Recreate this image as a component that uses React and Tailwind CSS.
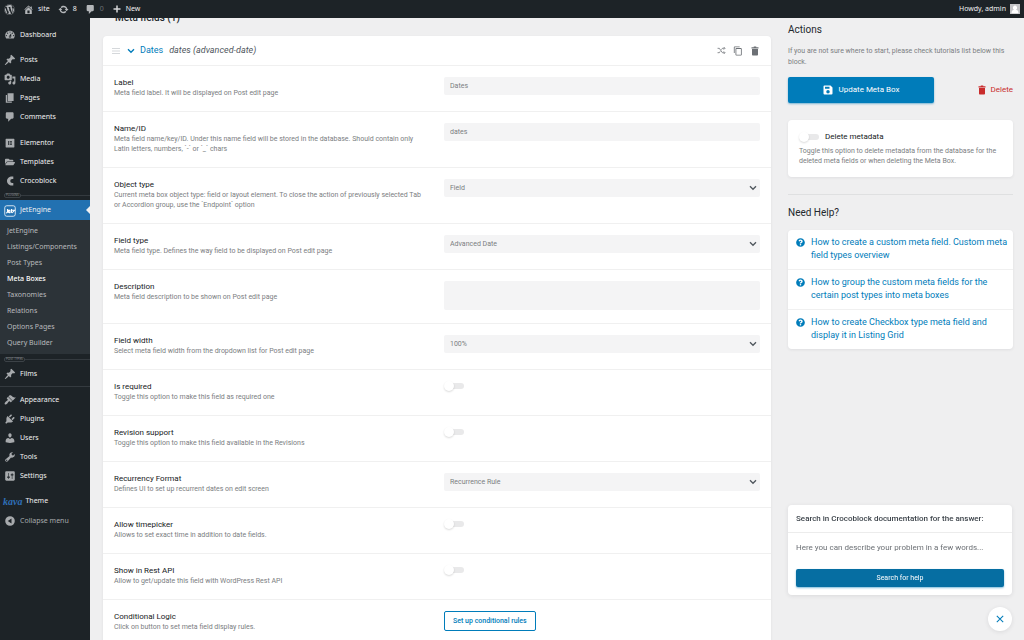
import React, { useState } from 'react';
import clsx from 'clsx';
import { FaWordpress, FaElementor, FaFolderOpen, FaQuestionCircle } from 'react-icons/fa';
import { MdContentCopy } from 'react-icons/md';

const ICONS = {
    home: 'M16 8.5l1.53 1.53-1.06 1.06L10 4.6l-6.47 6.49-1.06-1.06L10 2.5l4 4v-2h2v4zm-6-2.46l6 5.99V18H4v-5.97zM12 17v-5H8v5h4z',
    update: 'M10.2 3.28c3.53 0 6.43 2.61 6.92 6h2.08l-3.5 4-3.5-4h2.32c-.45-1.97-2.21-3.45-4.32-3.45-1.45 0-2.73.71-3.54 1.78L4.95 5.66C6.23 4.2 8.11 3.28 10.2 3.28zm-.4 13.44c-3.52 0-6.43-2.61-6.92-6H.8l3.5-4c1.17 1.33 2.33 2.67 3.5 4H5.48c.45 1.97 2.21 3.45 4.32 3.45 1.45 0 2.73-.71 3.54-1.78l1.71 1.95c-1.28 1.46-3.15 2.38-5.25 2.38z',
    plus: 'M17 8.5v3h-5.5V17h-3v-5.5H3v-3h5.5V3h3v5.5z',
    dashboard: 'M3.76 16h12.48c1.1-1.37 1.76-3.11 1.76-5 0-4.42-3.58-8-8-8s-8 3.58-8 8c0 1.89.66 3.63 1.76 5zM10 4c.55 0 1 .45 1 1s-.45 1-1 1-1-.45-1-1 .45-1 1-1zM6 6c.55 0 1 .45 1 1s-.45 1-1 1-1-.45-1-1 .45-1 1-1zm8 0c.55 0 1 .45 1 1s-.45 1-1 1-1-.45-1-1 .45-1 1-1zm-5.37 5.55L12 7v6c0 1.1-.9 2-2 2s-2-.9-2-2c0-.57.24-1.08.63-1.45zM4 10c.55 0 1 .45 1 1s-.45 1-1 1-1-.45-1-1 .45-1 1-1zm12 0c.55 0 1 .45 1 1s-.45 1-1 1-1-.45-1-1 .45-1 1-1zm-5 3c0-.55-.45-1-1-1s-1 .45-1 1 .45 1 1 1 1-.45 1-1z',
    post: 'M10.44 3.02l1.82-1.82 6.36 6.35-1.83 1.82c-1.05-.68-2.48-.57-3.41.36l-.75.75c-.92.93-1.04 2.35-.35 3.41l-1.83 1.82-2.41-2.41-2.8 2.79c-.42.42-3.38 2.71-3.8 2.29s1.86-3.39 2.28-3.81l2.79-2.79L4.1 9.36l1.83-1.82c1.05.69 2.48.57 3.4-.36l.75-.75c.93-.92 1.05-2.35.36-3.41z',
    media: 'M13 11V4c0-.55-.45-1-1-1h-1.67L9 1H5L3.67 3H2c-.55 0-1 .45-1 1v7c0 .55.45 1 1 1h10c.55 0 1-.45 1-1zM7 4.5c1.38 0 2.5 1.12 2.5 2.5S8.38 9.5 7 9.5 4.5 8.38 4.5 7 5.62 4.5 7 4.5zM14 6h5v10.5c0 1.38-1.12 2.5-2.5 2.5S14 17.88 14 16.5s1.12-2.5 2.5-2.5c.17 0 .34.02.5.05V9h-3V6zm-4 8.05V13h2v3.5c0 1.38-1.12 2.5-2.5 2.5S7 17.88 7 16.5 8.12 14 9.5 14c.17 0 .34.02.5.05z',
    page: 'M6 15V2h10v13H6zm-1 1h8v2H3V5h2v11z',
    comment: 'M5 2h9c1.1 0 2 .9 2 2v7c0 1.1-.9 2-2 2h-2l-5 5v-5H5c-1.1 0-2-.9-2-2V4c0-1.1.9-2 2-2z',
    crocoblock: 'M15.5 2.5v4.2h-1.8a3.3 3.3 0 0 0 0 6.6h1.8v4.2h-2.2C8.700 17.500 5 14.200 5 10s3.700-7.500 8.300-7.500z',
    appearance: 'M14.48 11.06L7.41 3.99l1.5-1.5c.5-.56 2.3-.47 3.51.32 1.21.8 1.43 1.28 2.91 2.1 1.18.64 2.45 1.26 4.45.85zm-.71.71L6.7 4.7 4.93 6.47c-.39.39-.39 1.02 0 1.41l1.06 1.06c.39.39.39 1.03 0 1.42-.6.6-1.43 1.11-2.21 1.69-.35.26-.7.53-1.01.84C1.43 14.23.4 16.08 1.4 17.07c.99 1 2.84-.03 4.18-1.36.31-.31.58-.66.85-1.02.57-.78 1.08-1.61 1.69-2.21.39-.39 1.02-.39 1.41 0l1.06 1.06c.39.39 1.02.39 1.41 0z',
    plugins: 'M13.11 4.36L9.87 7.6 8 5.73l3.24-3.24c.35-.34 1.05-.2 1.56.32.52.51.66 1.21.31 1.55zm-8 1.77l.91-1.12 9.01 9.01-1.19.84c-.71.71-2.63 1.16-3.82 1.16H6.14L4.9 17.26c-.59.59-1.54.59-2.12 0-.59-.58-.59-1.53 0-2.12l1.24-1.24v-3.88c0-1.13.4-3.19 1.09-3.89zm7.26 3.97l3.24-3.24c.34-.35 1.04-.21 1.55.31.52.51.66 1.21.31 1.55l-3.24 3.25z',
    users: 'M10 9.25c-2.27 0-2.73-3.44-2.73-3.44C7 4.02 7.82 2 9.97 2c2.16 0 2.98 2.02 2.71 3.81 0 0-.41 3.44-2.68 3.44zm0 2.57L12.72 10c2.39 0 4.52 2.33 4.52 4.53v2.49s-3.65 1.13-7.24 1.13c-3.65 0-7.24-1.13-7.24-1.13v-2.49c0-2.25 1.94-4.48 4.47-4.48z',
    tools: 'M16.68 9.77c-1.34 1.34-3.3 1.67-4.95.99l-5.41 6.52c-.99.99-2.59.99-3.58 0s-.99-2.59 0-3.57l6.52-5.42c-.68-1.65-.35-3.61.99-4.95 1.28-1.28 3.12-1.62 4.72-1.06l-2.89 2.89 2.82 2.82 2.86-2.87c.53 1.58.18 3.39-1.08 4.65zM3.81 16.21c.4.39 1.04.39 1.43 0 .4-.4.4-1.04 0-1.43-.39-.4-1.03-.4-1.43 0-.39.39-.39 1.03 0 1.43z',
    settings: 'M18 16V4c0-1.1-.9-2-2-2H4c-1.1 0-2 .9-2 2v12c0 1.1.9 2 2 2h12c1.1 0 2-.9 2-2zM8 11h1c.55 0 1 .45 1 1s-.45 1-1 1H8v1.5c0 .28-.22.5-.5.5s-.5-.22-.5-.5V13H6c-.55 0-1-.45-1-1s.45-1 1-1h1V5.5c0-.28.22-.5.5-.5s.5.22.5.5V11zm5-2h-1c-.55 0-1-.45-1-1s.45-1 1-1h1V5.5c0-.28.22-.5.5-.5s.5.22.5.5V7h1c.55 0 1 .45 1 1s-.45 1-1 1h-1v5.5c0 .28-.22.5-.5.5s-.5-.22-.5-.5V9z',
    collapse: 'M10 2a8 8 0 1 0 0 16 8 8 0 0 0 0-16zm2.500 12.200L6.300 10l6.200-4.200z',
    trash: 'M7.500 1h5v1.500H17v2.300H3V2.500h4.500zM4 6h12v11c0 1.100-.9 2-2 2H6c-1.100 0-2-.9-2-2z',
    save: 'M3 1h12l4 4v12a2 2 0 0 1-2 2H3a2 2 0 0 1-2-2V3a2 2 0 0 1 2-2zm1 2.500v4h9v-4zm6 6.500a3.500 3.500 0 1 0 0 7 3.500 3.500 0 0 0 0-7z',
};

const Icon = ({ name, className = 'size-3' }) => (
    <svg viewBox="0 0 20 20" className={clsx('shrink-0 fill-current', className)} fillRule="evenodd" aria-hidden="true">
        <path d={ICONS[name]} />
    </svg>
);

const JetIcon = () => (
    <svg viewBox="0 0 24 24" className="size-3 shrink-0" fill="none" stroke="currentColor" aria-hidden="true">
        <rect x="1.500" y="1.500" width="21" height="21" rx="4" strokeWidth="1.600" />
        <path d="M7 8v5c0 2-1 3-3 3M8 12.500h4c0-3-4-3-4 0s3 3.500 5 2M15 8v6c0 1 .6 1.500 2 1.500M13.500 10.500H21L17 15" strokeWidth="2.200" />
    </svg>
);

const Chevron = ({ className }) => (
    <svg viewBox="0 0 12 8" className={className} fill="none" stroke="currentColor" strokeWidth="2" aria-hidden="true">
        <path d="M1.500 1.500L6 6l4.500-4.500" />
    </svg>
);

const AdminBar = () => (
    <header className="relative z-10 flex h-[18px] shrink-0 items-center justify-between bg-[#1d2327] px-1 font-['Noto_Sans',sans-serif] text-[7px] text-[#f0f0f1]">
        <div className="flex items-center gap-2">
            <a href="#wp" aria-label="About WordPress" className="text-[#b4b7ba]"><FaWordpress className="size-[11px]" /></a>
            <a href="#site" className="flex items-center gap-1"><Icon name="home" className="size-[11px] text-[#b4b7ba]" />site</a>
            <a href="#updates" className="flex items-center gap-1"><Icon name="update" className="size-[11px] text-[#b4b7ba]" />8</a>
            <a href="#comments" className="flex items-center gap-1 text-[#6d7175]"><Icon name="comment" className="size-[11px] text-[#b4b7ba]" />0</a>
            <a href="#new" className="flex items-center gap-1"><Icon name="plus" className="size-2.5 text-[#d5d6d8]" />New</a>
        </div>
        <a href="#profile" className="flex items-center gap-1">
            Howdy, admin
            <svg viewBox="0 0 20 20" className="size-2.5 bg-[#c3c4c7]" aria-hidden="true">
                <path d="M10 3a4 4.500 0 0 1 2 8.500c3 .5 5 2.500 5 7H3c0-4.500 2-6.500 5-7A4 4.500 0 0 1 10 3z" fill="#fff" />
            </svg>
        </a>
    </header>
);

const NavItem = ({ icon, active, muted, children }) => (
    <a
        href="#menu"
        aria-current={active ? 'page' : undefined}
        className={clsx(
            'relative flex items-center gap-1 pt-px pl-1 text-[7px]',
            active ? 'h-5 bg-[#2271b1]' : 'h-[19px]',
            muted ? 'text-[#a7aaad]' : 'text-[#f0f0f1]'
        )}
    >
        <span className={clsx('flex size-3 items-center justify-center', active ? 'text-white' : 'text-[#a7aaad]')}>{icon}</span>
        {children}
        {active && <span className="absolute top-1.5 right-0 border-y-4 border-r-4 border-y-transparent border-r-[#f0f0f1]" />}
    </a>
);

const NavDivider = ({ label }) => (
    <div className="flex h-2.5 items-center pl-1">
        <span className="rounded-xs border border-[#3c4247] px-px text-[3px] leading-[3px] text-[#8c8f94] uppercase">{label}</span>
        <span className="h-px flex-1 bg-[#343a3f]" />
    </div>
);

const SUBMENU = ['JetEngine', 'Listings/Components', 'Post Types', 'Meta Boxes', 'Taxonomies', 'Relations', 'Options Pages', 'Query Builder'];

const Sidebar = () => (
    <nav className="w-[90px] shrink-0 bg-[#1d2327] pt-[7px] font-['Noto_Sans',sans-serif]">
        <NavItem icon={<Icon name="dashboard" />}>Dashboard</NavItem>
        <div className="h-1.5" />
        <NavItem icon={<Icon name="post" />}>Posts</NavItem>
        <NavItem icon={<Icon name="media" />}>Media</NavItem>
        <NavItem icon={<Icon name="page" />}>Pages</NavItem>
        <NavItem icon={<Icon name="comment" />}>Comments</NavItem>
        <div className="h-[7px]" />
        <NavItem icon={<FaElementor className="size-2.5" />}>Elementor</NavItem>
        <NavItem icon={<FaFolderOpen className="size-2.5" />}>Templates</NavItem>
        <NavItem icon={<Icon name="crocoblock" />}>Crocoblock</NavItem>
        <NavDivider label="Plugins" />
        <NavItem active icon={<JetIcon />}>JetEngine</NavItem>
        <ul className="bg-[#2c3338] py-[3px]">
            {SUBMENU.map((item) => (
                <li key={item}>
                    <a
                        href="#submenu"
                        className={clsx(
                            'flex h-4 items-center pl-[7px] text-[7px]',
                            item === 'Meta Boxes' ? 'font-medium text-white' : 'text-[#b8babd]'
                        )}
                    >
                        {item}
                    </a>
                </li>
            ))}
        </ul>
        <NavDivider label="Post types" />
        <NavItem icon={<Icon name="post" />}>Films</NavItem>
        <div className="flex h-[7px] items-center"><span className="h-px flex-1 bg-[#343a3f]" /></div>
        <NavItem icon={<Icon name="appearance" />}>Appearance</NavItem>
        <NavItem icon={<Icon name="plugins" />}>Plugins</NavItem>
        <NavItem icon={<Icon name="users" />}>Users</NavItem>
        <NavItem icon={<Icon name="tools" />}>Tools</NavItem>
        <NavItem icon={<Icon name="settings" />}>Settings</NavItem>
        <div className="h-1.5" />
        <a href="#theme" className="flex h-5 items-center gap-[3px] pl-[3px] text-[7px] text-[#f0f0f1]">
            <span className="font-['Liberation_Serif',serif] text-[10px] font-bold text-[#2f6fb7] italic">kava</span>
            Theme
        </a>
        <NavItem muted icon={<Icon name="collapse" />}>Collapse menu</NavItem>
    </nav>
);

const Toggle = ({ id }) => (
    <input
        id={id}
        type="checkbox"
        className="relative block h-2.5 w-5 shrink-0 cursor-pointer appearance-none before:absolute before:inset-y-0.5 before:right-0 before:left-1 before:rounded-full before:bg-[#e9e9ea] after:absolute after:top-0 after:left-0 after:size-2.5 after:rounded-full after:bg-white after:shadow-[0_1px_2px_rgba(0,0,0,0.15)] checked:before:bg-[#7fbddb] checked:after:left-2.5"
    />
);

const inputClass = 'block w-full rounded-xs bg-[#f4f4f5] px-1.5 text-[7px] text-[#7b7e81] outline-none';

const Field = ({ field }) => {
    const { id, type, value } = field;

    if (type === 'text') return <input id={id} type="text" defaultValue={value} className={clsx(inputClass, 'h-[18px]')} />;
    if (type === 'textarea') return <textarea id={id} className={clsx(inputClass, 'h-[29px] resize-none')} />;
    if (type === 'toggle') return <Toggle id={id} />;
    if (type === 'button') {
        return (
            <button id={id} type="button" className="block h-5 rounded-xs border border-[#007cba] px-2 text-[7px] font-medium text-[#007cba]">
                {value}
            </button>
        );
    }
    return (
        <div className="relative">
            <select id={id} className={clsx(inputClass, 'h-[18px] appearance-none')}>
                <option>{value}</option>
            </select>
            <Chevron className="pointer-events-none absolute top-1.5 right-[3px] h-1.5 w-2 text-[#50575e]" />
        </div>
    );
};

const FIELDS = [
    { id: 'label', type: 'text', label: 'Label', desc: 'Meta field label. It will be displayed on Post edit page', value: 'Dates' },
    { id: 'name', type: 'text', label: 'Name/ID', desc: 'Meta field name/key/ID. Under this name field will be stored in the database. Should contain only Latin letters, numbers, `-` or `_` chars', value: 'dates' },
    { id: 'object-type', type: 'select', label: 'Object type', desc: 'Current meta box object type: field or layout element. To close the action of previously selected Tab or Accordion group, use the `Endpoint` option', value: 'Field' },
    { id: 'field-type', type: 'select', label: 'Field type', desc: 'Meta field type. Defines the way field to be displayed on Post edit page', value: 'Advanced Date' },
    { id: 'description', type: 'textarea', label: 'Description', desc: 'Meta field description to be shown on Post edit page' },
    { id: 'width', type: 'select', label: 'Field width', desc: 'Select meta field width from the dropdown list for Post edit page', value: '100%' },
    { id: 'required', type: 'toggle', label: 'Is required', desc: 'Toggle this option to make this field as required one' },
    { id: 'revisions', type: 'toggle', label: 'Revision support', desc: 'Toggle this option to make this field available in the Revisions' },
    { id: 'recurrency', type: 'select', label: 'Recurrency Format', desc: 'Defines UI to set up recurrent dates on edit screen', value: 'Recurrence Rule' },
    { id: 'timepicker', type: 'toggle', label: 'Allow timepicker', desc: 'Allows to set exact time in addition to date fields.' },
    { id: 'rest-api', type: 'toggle', label: 'Show in Rest API', desc: 'Allow to get/update this field with WordPress Rest API' },
    { id: 'conditional', type: 'button', label: 'Conditional Logic', desc: 'Click on button to set meta field display rules.', value: 'Set up conditional rules' },
];

const MetaFields = () => (
    <main className="min-w-0 flex-1">
        <h2 className="-mt-[7px] mb-[11px] pl-3 text-[10px] leading-[14px] font-medium text-[#23282d]">Meta fields (1)</h2>
        <section className="rounded-sm bg-white shadow-[0_1px_3px_rgba(35,40,45,0.08)]">
            <div className="flex h-[30px] items-center justify-between border-b border-[#f0f0f0] pr-[11px] pl-[9px]">
                <div className="flex items-center">
                    <svg viewBox="0 0 8 8" className="mr-[7px] size-2 stroke-[#d5d8db]" aria-hidden="true">
                        <path d="M0 1.500h8M0 4h8M0 6.500h8" />
                    </svg>
                    <button type="button" className="flex items-center gap-[5px] text-[9px] text-[#007cba]">
                        <Chevron className="h-1.5 w-2" />
                        Dates
                    </button>
                    <span className="ml-1.5 text-[9px] text-[#50575e] italic">dates (advanced-date)</span>
                </div>
                <div className="flex items-center gap-[7px] text-[#6c7075]">
                    <button type="button" aria-label="Shuffle">
                        <svg viewBox="0 0 20 16" className="h-[7px] w-[9px]" fill="none" stroke="currentColor" strokeWidth="1.800" aria-hidden="true">
                            <path d="M1 3h4l7 10h5M1 13h4l2-3M10 6l2-3h5M15 0l3 3-3 3M15 10l3 3-3 3" />
                        </svg>
                    </button>
                    <button type="button" aria-label="Duplicate"><MdContentCopy className="size-2.5" /></button>
                    <button type="button" aria-label="Remove"><Icon name="trash" className="size-2.5" /></button>
                </div>
            </div>
            {FIELDS.map((field) => (
                <div key={field.id} className="grid grid-cols-2 gap-x-3.5 border-b border-[#f0f0f0] px-[11px] pt-[11px] pb-[13px]">
                    <div className="pr-2">
                        <label htmlFor={field.id} className="block text-[8px] leading-[11px] text-[#16191c]">{field.label}</label>
                        <p className="text-[7px] leading-[10px] text-[#7b7e81]">{field.desc}</p>
                    </div>
                    <div><Field field={field} /></div>
                </div>
            ))}
        </section>
    </main>
);

const HELP_LINKS = [
    'How to create a custom meta field. Custom meta field types overview',
    'How to group the custom meta fields for the certain post types into meta boxes',
    'How to create Checkbox type meta field and display it in Listing Grid',
];

const Actions = () => (
    <aside className="w-[225px] shrink-0 pt-1.5">
        <h3 className="text-[10px] leading-3 text-[#23282d]">Actions</h3>
        <p className="mt-2.5 text-[7px] leading-[11px] text-[#7b7e81]">
            If you are not sure where to start, please check tutorials list below this block.
        </p>
        <div className="mt-[9px] flex items-center justify-between">
            <button type="button" className="flex h-[26px] w-[146px] items-center justify-center gap-1.5 rounded-xs bg-[#007cba] text-[8px] text-white shadow-[0_1px_2px_rgba(0,124,186,0.5)]">
                <Icon name="save" className="size-2.5" />
                Update Meta Box
            </button>
            <button type="button" className="flex items-center gap-[3px] text-[8px] text-[#c92c2c]">
                <Icon name="trash" className="size-2.5" />
                Delete
            </button>
        </div>
        <div className="mt-[17px] rounded-sm bg-white p-[11px] shadow-[0_1px_3px_rgba(35,40,45,0.08)]">
            <div className="flex items-center gap-1.5">
                <Toggle id="delete-metadata" />
                <label htmlFor="delete-metadata" className="text-[8px] leading-[11px] text-[#16191c]">Delete metadata</label>
            </div>
            <p className="mt-1 text-[7px] leading-[10px] text-[#7b7e81]">
                Toggle this option to delete metadata from the database for the deleted meta fields or when deleting the Meta Box.
            </p>
        </div>
        <hr className="mt-[17px] border-[#dfe0e1]" />
        <h3 className="mt-3 text-[10px] leading-3 text-[#23282d]">Need Help?</h3>
        <ul className="mt-[11px] divide-y divide-[#f0f0f0] rounded-sm bg-white shadow-[0_1px_3px_rgba(35,40,45,0.08)]">
            {HELP_LINKS.map((text) => (
                <li key={text}>
                    <a href="#help" className="flex gap-1.5 pt-1.5 pr-1 pb-[7px] pl-2 text-[9px] leading-[13px] text-[#007cba]">
                        <FaQuestionCircle className="mt-0.5 size-[9px] shrink-0" />
                        {text}
                    </a>
                </li>
            ))}
        </ul>
    </aside>
);

const DocSearch = () => {
    const [open, setOpen] = useState(true);

    return (
        <div className="fixed right-3 bottom-[9px] flex w-56 flex-col items-end gap-3">
            {open && (
                <div className="w-full rounded-sm bg-white shadow-[0_1px_4px_rgba(35,40,45,0.1)]">
                    <label htmlFor="doc-search" className="flex h-7 items-center border-b border-[#ececec] px-2 text-[8px] font-medium text-[#3c434a]">
                        Search in Crocoblock documentation for the answer:
                    </label>
                    <div className="px-2 pt-[5px] pb-2">
                        <input
                            id="doc-search"
                            type="text"
                            placeholder="Here you can describe your problem in a few words..."
                            className="mb-[13px] block h-[18px] w-full text-[8px] outline-none placeholder:text-[#6c7075]"
                        />
                        <button type="button" className="block h-[18px] w-full rounded-xs bg-[#066ea2] text-[7px] text-white shadow-[0_1px_2px_rgba(0,124,186,0.5)]">
                            Search for help
                        </button>
                    </div>
                </div>
            )}
            <button
                type="button"
                aria-label="Close"
                onClick={() => setOpen(!open)}
                className="flex size-6 items-center justify-center rounded-full bg-white text-[#007cba] shadow-[0_1px_4px_rgba(35,40,45,0.1)]"
            >
                <svg viewBox="0 0 10 10" className="size-2" fill="none" stroke="currentColor" strokeWidth="1.300" aria-hidden="true">
                    <path d="M1 1l8 8M9 1L1 9" />
                </svg>
            </button>
        </div>
    );
};

const App = () => {
    return (
        <div className="flex h-screen flex-col overflow-hidden bg-[#efeff0] font-['Roboto',sans-serif]">
            <AdminBar />
            <div className="flex flex-1">
                <Sidebar />
                <div className="flex min-w-0 flex-1 items-start gap-[17px] pr-[11px] pl-[13px]">
                    <MetaFields />
                    <Actions />
                </div>
            </div>
            <DocSearch />
        </div>
    );
};

export default App;
